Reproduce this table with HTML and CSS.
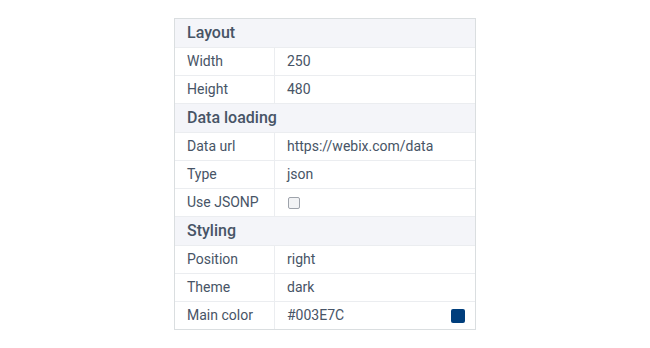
FILE: index.html
```html
<!DOCTYPE html>
<html>
<head>
<meta charset="utf-8">
<link rel="stylesheet" href="styles.css">
</head>
<body>
<div class="sheet">
  <div class="group">Layout</div>
  <div class="row"><div class="label">Width</div><div class="value">250</div></div>
  <div class="row"><div class="label">Height</div><div class="value">480</div></div>
  <div class="group">Data loading</div>
  <div class="row"><div class="label">Data url</div><div class="value">https://webix.com/data</div></div>
  <div class="row"><div class="label">Type</div><div class="value">json</div></div>
  <div class="row"><div class="label">Use JSONP</div><div class="value"><span class="check"></span></div></div>
  <div class="group">Styling</div>
  <div class="row"><div class="label">Position</div><div class="value">right</div></div>
  <div class="row"><div class="label">Theme</div><div class="value">dark</div></div>
  <div class="row"><div class="label">Main color</div><div class="value color"><span>#003E7C</span><span class="swatch"></span></div></div>
</div>
</body>
</html>
```
FILE: styles.css
```css
html, body {
  margin: 0;
  background: #ffffff;
}

body {
  padding-top: 18px;
  font-family: Roboto, "Liberation Sans", sans-serif;
  color: #475466;
}

.sheet {
  width: 300px;
  margin: 0 auto;
  border: 1px solid #dadee0;
}

.group {
  height: 28px;
  line-height: 28px;
  padding-left: 12px;
  background: #f4f5f9;
  border-bottom: 1px solid #ebedf0;
  font-size: 16px;
  font-weight: 500;
}

.row {
  display: flex;
  height: 27px;
  border-bottom: 1px solid #ebedf0;
  font-size: 14px;
}

.row:last-child {
  border-bottom: 0;
}

.label {
  width: 87px;
  padding-left: 12px;
  border-right: 1px solid #ebedf0;
  line-height: 27px;
  white-space: nowrap;
}

.value {
  flex: 1;
  padding-left: 12px;
  line-height: 27px;
  display: flex;
  align-items: center;
}

.value.color {
  justify-content: space-between;
  padding-right: 10px;
}

.check {
  display: inline-block;
  width: 10px;
  height: 10px;
  border: 1px solid #9ea3ab;
  border-radius: 2px;
  background: #f2f3f5;
  margin-left: 1px;
}

.swatch {
  display: inline-block;
  width: 14px;
  height: 14px;
  border-radius: 2px;
  background: #003e7c;
}
```
